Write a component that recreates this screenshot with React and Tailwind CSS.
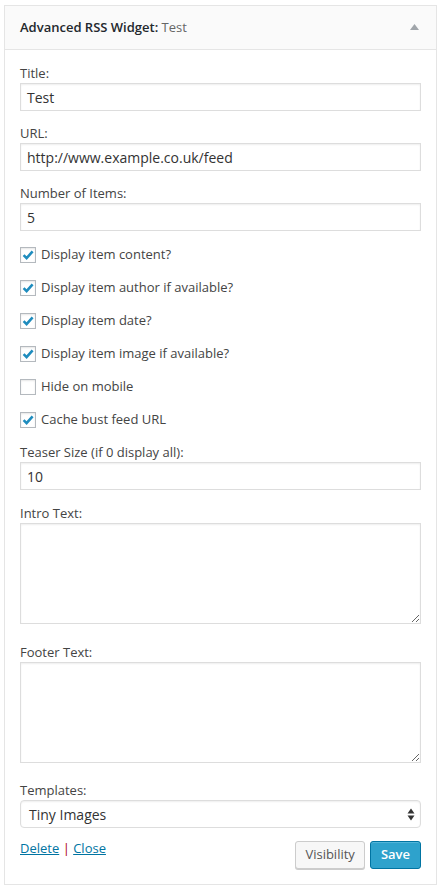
import React from "react";

const font = { fontFamily: '"Open Sans", "Noto Sans", sans-serif' };

function Check({ checked, label }) {
  return (
    <div className="flex items-center h-[19px] mb-[14px]">
      <span className="w-[16px] h-[16px] border border-[#b4b9be] bg-white shadow-[inset_0_1px_2px_rgba(0,0,0,0.1)] flex items-center justify-center shrink-0 mr-[5px]">
        {checked && (
          <svg width="14" height="14" viewBox="0 0 14 14">
            <path d="M2.6 7.2 L5.6 10.2 L11.6 3.4" fill="none" stroke="#1e8cbe" strokeWidth="2.6" strokeLinejoin="miter" />
          </svg>
        )}
      </span>
      <span className="text-[13px] text-[#444] leading-[19px]">{label}</span>
    </div>
  );
}

function Field({ label, value, mb = "mb-[13px]" }) {
  return (
    <div className={mb}>
      <div className="text-[13px] text-[#444] leading-[19px] h-[19px]">{label}</div>
      <div className="h-[28px] border border-[#ddd] bg-white shadow-[inset_0_1px_2px_rgba(0,0,0,0.07)] flex items-center px-[6px] text-[14px] text-[#333]">
        {value}
      </div>
    </div>
  );
}

export default function App() {
  return (
    <div className="bg-white min-h-[889px] pt-[5px] pl-[4px]" style={font}>
      <div className="w-[433px] border border-[#e5e5e5] bg-white">
        <div className="h-[44px] bg-[#fafafa] border-b border-[#e5e5e5] flex items-center justify-between pl-[15px] pr-[17px]">
          <div className="text-[13px] leading-[19px]">
            <span className="font-semibold text-[#23282d]">Advanced RSS Widget:</span>
            <span className="text-[#666]"> Test</span>
          </div>
          <svg width="9" height="6" viewBox="0 0 9 6" className="mb-[1px]">
            <path d="M0 6 L4.5 0 L9 6 Z" fill="#a0a5aa" />
          </svg>
        </div>
        <div className="px-[15px] pt-[14px] pb-[15px]">
          <Field label="Title:" value="Test" />
          <Field label="URL:" value="http://www.example.co.uk/feed" />
          <Field label="Number of Items:" value="5" mb="mb-[14px]" />
          <Check checked label="Display item content?" />
          <Check checked label="Display item author if available?" />
          <Check checked label="Display item date?" />
          <Check checked label="Display item image if available?" />
          <Check label="Hide on mobile" />
          <Check checked label="Cache bust feed URL" />
          <Field label="Teaser Size (if 0 display all):" value="10" mb="mb-[14px]" />
          <div className="mb-[19px]">
            <div className="text-[13px] text-[#444] leading-[19px] h-[19px]">Intro Text:</div>
            <textarea className="block w-full h-[101px] border border-[#ddd] bg-white shadow-[inset_0_1px_2px_rgba(0,0,0,0.07)] outline-none" />
          </div>
          <div className="mb-[18px]">
            <div className="text-[13px] text-[#444] leading-[19px] h-[19px]">Footer Text:</div>
            <textarea className="block w-full h-[101px] border border-[#ddd] bg-white shadow-[inset_0_1px_2px_rgba(0,0,0,0.07)] outline-none" />
          </div>
          <div className="mb-[13px]">
            <div className="text-[13px] text-[#444] leading-[19px] h-[19px]">Templates:</div>
            <div className="h-[28px] border border-[#ddd] rounded-[4px] bg-white shadow-[inset_0_1px_2px_rgba(0,0,0,0.07)] flex items-center justify-between pl-[8px] pr-[5px] text-[14px] text-[#333]">
              <span>Tiny Images</span>
              <svg width="8" height="13" viewBox="0 0 8 13">
                <path d="M0.5 5.5 L4 0.5 L7.5 5.5 Z" fill="#333" />
                <path d="M0.5 7.5 L4 12.5 L7.5 7.5 Z" fill="#333" />
              </svg>
            </div>
          </div>
          <div className="flex items-start justify-between">
            <div className="text-[13px] leading-[19px] mt-[-2px]">
              <span className="text-[#0074a2] underline">Delete</span>
              <span className="text-[#a00]"> | </span>
              <span className="text-[#0074a2] underline">Close</span>
            </div>
            <div className="flex gap-[5px]">
              <div className="h-[28px] px-[9px] border border-[#ccc] rounded-[3px] bg-[#f7f7f7] text-[13px] text-[#555] flex items-center shadow-[0_1px_0_#ccc]">
                Visibility
              </div>
              <div className="h-[28px] px-[10px] border border-[#0074a2] rounded-[3px] bg-[#2ea2cc] text-[13px] font-semibold text-white flex items-center shadow-[inset_0_1px_0_rgba(120,200,230,0.5)]">
                Save
              </div>
            </div>
          </div>
        </div>
      </div>
    </div>
  );
}
